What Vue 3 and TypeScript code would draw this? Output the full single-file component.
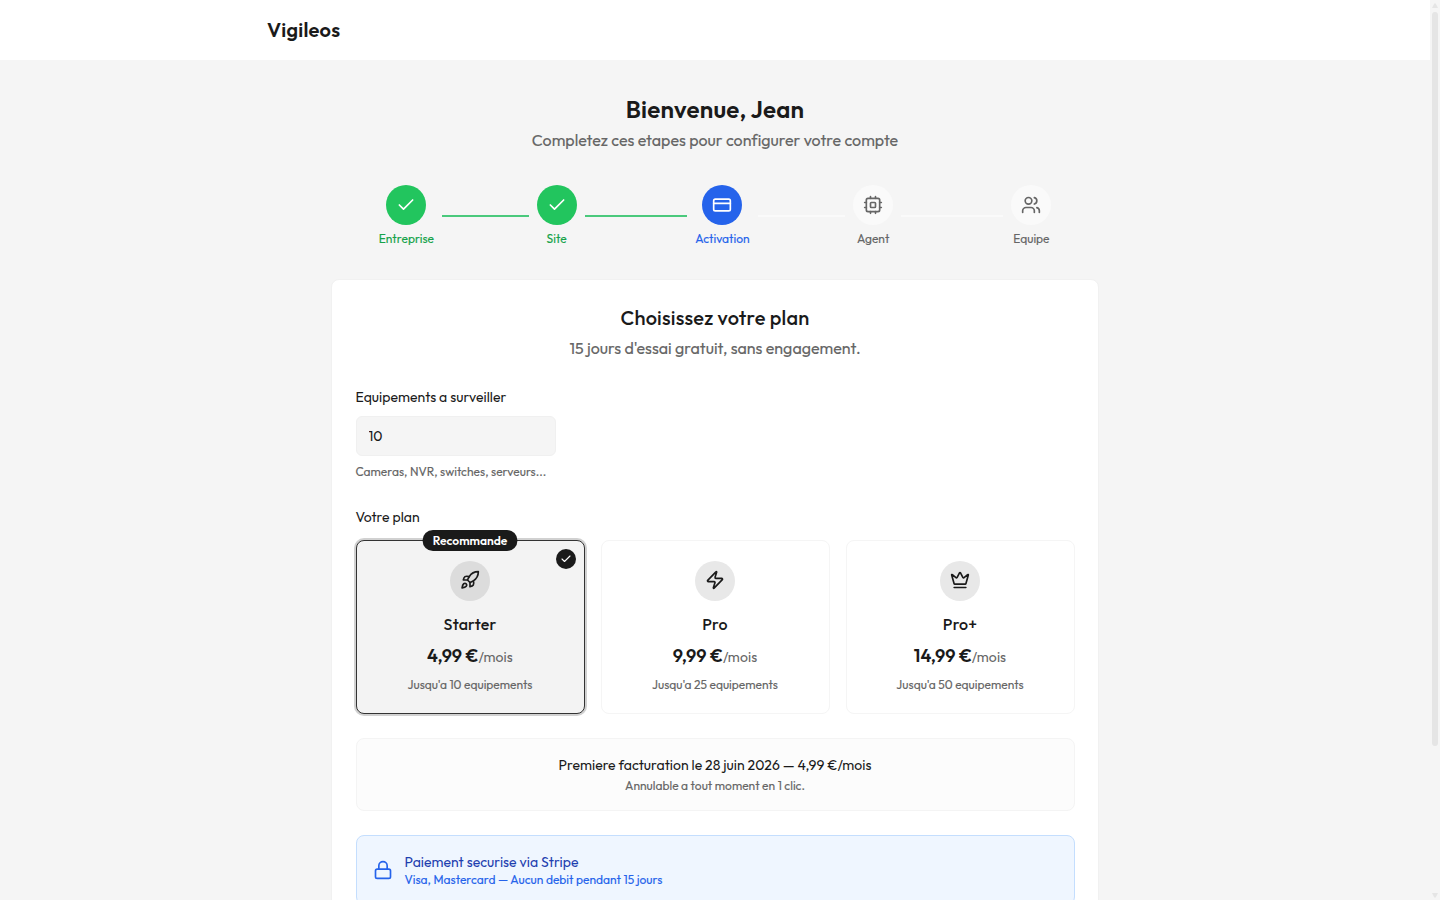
<script setup lang="ts">
import { ref } from 'vue'

type StepState = 'done' | 'current' | 'todo'
interface Step { label: string; state: StepState; icon: string; key: string }
interface Plan { name: string; key: string; price: string; limit: number; icon: string }

const icons: Record<string, string> = {
  check: '<path d="M20 6 9 17l-5-5"/>',
  card: '<rect width="20" height="14" x="2" y="5" rx="2"/><path d="M2 10h20"/>',
  cpu: '<rect width="16" height="16" x="4" y="4" rx="2"/><rect width="6" height="6" x="9" y="9" rx="1"/><path d="M15 2v2M15 20v2M2 15h2M2 9h2M20 15h2M20 9h2M9 2v2M9 20v2"/>',
  users: '<path d="M16 21v-2a4 4 0 0 0-4-4H6a4 4 0 0 0-4 4v2"/><circle cx="9" cy="7" r="4"/><path d="M22 21v-2a4 4 0 0 0-3-3.87M16 3.13a4 4 0 0 1 0 7.75"/>',
  rocket: '<path d="M4.5 16.5c-1.5 1.26-2 5-2 5s3.74-.5 5-2c.71-.84.7-2.13-.09-2.91a2.18 2.18 0 0 0-2.91-.09z"/><path d="m12 15-3-3a22 22 0 0 1 2-3.95A12.88 12.88 0 0 1 22 2c0 2.72-.78 7.5-6 11a22.35 22.35 0 0 1-4 2z"/><path d="M9 12H4s.55-3.03 2-4c1.62-1.08 5 0 5 0"/><path d="M12 15v5s3.03-.55 4-2c1.08-1.62 0-5 0-5"/>',
  zap: '<path d="M4 14a1 1 0 0 1-.78-1.63l9.9-10.2a.5.5 0 0 1 .86.46l-1.92 6.02A1 1 0 0 0 13 10h7a1 1 0 0 1 .78 1.63l-9.9 10.2a.5.5 0 0 1-.86-.46l1.92-6.02A1 1 0 0 0 11 14z"/>',
  crown: '<path d="M11.562 3.266a.5.5 0 0 1 .876 0L15.39 8.87a1 1 0 0 0 1.516.294L21.183 5.5a.5.5 0 0 1 .798.519l-2.834 10.246a1 1 0 0 1-.956.734H5.81a1 1 0 0 1-.957-.734L2.02 6.02a.5.5 0 0 1 .798-.519l4.276 3.664a1 1 0 0 0 1.516-.294z"/><path d="M5 21h14"/>',
  lock: '<rect width="18" height="11" x="3" y="11" rx="2"/><path d="M7 11V7a5 5 0 0 1 10 0v4"/>',
}

const steps: Step[] = [
  { label: 'Entreprise', state: 'done', icon: 'check', key: 'entreprise' },
  { label: 'Site', state: 'done', icon: 'check', key: 'site' },
  { label: 'Activation', state: 'current', icon: 'card', key: 'activation' },
  { label: 'Agent', state: 'todo', icon: 'cpu', key: 'agent' },
  { label: 'Equipe', state: 'todo', icon: 'users', key: 'equipe' },
]

const plans: Plan[] = [
  { name: 'Starter', key: 'starter', price: '4,99 €', limit: 10, icon: 'rocket' },
  { name: 'Pro', key: 'pro', price: '9,99 €', limit: 25, icon: 'zap' },
  { name: 'Pro+', key: 'proplus', price: '14,99 €', limit: 50, icon: 'crown' },
]

const devices = ref('10')
const selected = ref('starter')
</script>

<template>
  <div class="page">
    <div class="content">
      <header class="header">
        <div class="header-inner"><span class="brand">Vigileos</span></div>
      </header>

      <main class="main">
        <h1 class="title">Bienvenue, Jean</h1>
        <p class="subtitle">Completez ces etapes pour configurer votre compte</p>

        <nav class="steps">
          <div v-for="(s, i) in steps" :key="s.key" class="step-item" :class="s.state">
            <div class="step" :class="'step-' + s.key">
              <span class="circle"><svg class="icon" viewBox="0 0 24 24" v-html="icons[s.icon]" /></span>
              <span class="step-label small">{{ s.label }}</span>
            </div>
            <span v-if="i < steps.length - 1" class="line" />
          </div>
        </nav>

        <section class="panel">
          <h2 class="panel-title">Choisissez votre plan</h2>
          <p class="panel-sub">15 jours d'essai gratuit, sans engagement.</p>

          <label class="label label-devices" for="devices">Equipements a surveiller</label>
          <input id="devices" v-model="devices" class="input" type="text" />
          <p class="help small">Cameras, NVR, switches, serveurs...</p>

          <p class="label label-plan">Votre plan</p>
          <div class="plans">
            <div
              v-for="p in plans"
              :key="p.key"
              class="plan"
              :class="{ selected: selected === p.key }"
              @click="selected = p.key"
            >
              <span v-if="p.key === 'starter'" class="badge">Recommande</span>
              <span v-if="selected === p.key" class="tick">
                <svg class="icon" viewBox="0 0 24 24" v-html="icons.check" />
              </span>
              <span class="plan-icon"><svg class="icon" viewBox="0 0 24 24" v-html="icons[p.icon]" /></span>
              <h3 class="plan-name">{{ p.name }}</h3>
              <p class="price"><span class="amount">{{ p.price }}</span><span class="per">/mois</span></p>
              <p class="limit small">Jusqu'a {{ p.limit }} equipements</p>
            </div>
          </div>

          <div class="billing">
            <p class="billing-main">Premiere facturation le 28 juin 2026 — 4,99 €/mois</p>
            <p class="billing-sub small">Annulable a tout moment en 1 clic.</p>
          </div>

          <div class="secure">
            <svg class="icon lock" viewBox="0 0 24 24" v-html="icons.lock" />
            <div>
              <p class="secure-main">Paiement securise via Stripe</p>
              <p class="secure-sub small">Visa, Mastercard — Aucun debit pendant 15 jours</p>
            </div>
          </div>
        </section>
      </main>
    </div>

    <div class="scrollbar">
      <svg class="arrow" viewBox="0 0 10 12"><path d="M2 8 4.3 3.5h1.4L8 8z" /></svg>
      <span class="thumb" />
      <svg class="arrow arrow-down" viewBox="0 0 10 12"><path d="M2 5h6L5.7 9.5H4.3z" /></svg>
    </div>
  </div>
</template>

<style>
body { margin: 0; overflow: hidden; }
</style>

<style scoped>
.page {
  display: flex;
  height: 900px;
  overflow: hidden;
  background: #f5f5f5;
  color: #1a1a1a;
  font-family: Outfit, Lato, sans-serif;
}
.page * { box-sizing: border-box; }
h1, h2, h3, p { margin: 0; }
.icon {
  width: 20px;
  height: 20px;
  fill: none;
  stroke: currentColor;
  stroke-width: 2;
  stroke-linecap: round;
  stroke-linejoin: round;
}
.small {
  font-size: 12px;
  line-height: 16px;
  letter-spacing: 0.015px;
  -webkit-text-stroke: 0.12px currentColor;
}
.content { flex: 1; height: 900px; overflow: hidden; background: #f5f5f5; }
.header { height: 60px; background: #fff; }
.header-inner { width: 896px; height: 60px; margin: 0 auto; display: flex; align-items: center; }
.brand { font-size: 20px; font-weight: 600; line-height: 28px; letter-spacing: 0.2px; }
.main { width: 768px; margin: 0 auto; padding-top: 32px; }
.title { font-size: 24px; font-weight: 600; line-height: 34px; letter-spacing: 0.2px; text-align: center; }
.subtitle,
.panel-sub {
  font-size: 16px;
  letter-spacing: 0.01px;
  text-align: center;
  color: #666;
  -webkit-text-stroke: 0.12px currentColor;
}
.subtitle { line-height: 28px; }

.steps { display: grid; grid-template-columns: repeat(4, 158.25px) 40px; margin: 31px 47px 32px 47.4px; height: 62px; }
.step-item { display: flex; align-items: center; gap: 8px; color: #666; }
.step { display: flex; flex-direction: column; align-items: center; gap: 6px; width: 40px; flex: none; }
.step-entreprise { width: 56px; }
.step-activation { width: 55px; }
.circle {
  width: 40px;
  height: 40px;
  border-radius: 50%;
  background: #fafafa;
  display: flex;
  align-items: center;
  justify-content: center;
}
.step-label { white-space: nowrap; }
.line { flex: 1; height: 2px; margin-right: 8px; background: #fafafa; }
.done { color: #16a34a; }
.done .circle { background: #22c55e; color: #fff; }
.done .line { background: #4ac97c; }
.current { color: #2563eb; }
.current .circle { background: #2563eb; color: #fff; }

.panel { height: 760px; padding: 24px 23.5px; background: #fff; border: 1px solid #f1f1f1; border-radius: 8px; }
.panel-title { font-size: 20px; font-weight: 500; line-height: 28px; letter-spacing: 0.2px; text-align: center; }
.panel-sub { margin-top: 4px; line-height: 24px; }
.label { display: block; font-size: 14px; line-height: 20px; letter-spacing: 0.03px; }
.label-devices { margin-top: 27px; }
.label-plan { margin-top: 27px; }
.input {
  display: block;
  width: 200px;
  height: 40px;
  margin-top: 9px;
  padding: 0 12px;
  border: 1px solid #f0f0f0;
  border-radius: 6px;
  background: #f5f5f5;
  color: #1a1a1a;
  font: 14px Outfit, Lato, sans-serif;
}
.help { margin-top: 8px; color: #666; }

.plans { display: grid; grid-template-columns: repeat(3, 1fr); gap: 16px; margin-top: 13px; }
.plan {
  position: relative;
  display: flex;
  flex-direction: column;
  align-items: center;
  height: 174px;
  padding-top: 20px;
  border: 1px solid #f5f5f5;
  border-radius: 8px;
}
.plan.selected { background: #f3f3f3; border-color: #333; box-shadow: 0 0 0 2px #d1d1d1; }
.badge {
  position: absolute;
  top: -11px;
  left: 50%;
  width: 95px;
  height: 21px;
  transform: translateX(-50%);
  border-radius: 10.5px;
  background: #1a1a1a;
  color: #fff;
  font-size: 12px;
  font-weight: 600;
  line-height: 22px;
  text-align: center;
}
.tick {
  position: absolute;
  top: 8px;
  right: 8px;
  display: flex;
  align-items: center;
  justify-content: center;
  width: 20px;
  height: 20px;
  border-radius: 50%;
  background: #1a1a1a;
  color: #fff;
}
.tick .icon { width: 12px; height: 12px; stroke-width: 2.25; }
.plan-icon {
  display: flex;
  align-items: center;
  justify-content: center;
  width: 40px;
  height: 40px;
  border-radius: 50%;
  background: #e8e8e8;
}
.plan-icon .icon { margin-bottom: 2px; }
.selected .plan-icon { background: #dcdcdc; }
.plan-name { margin-top: 11px; font-size: 16px; font-weight: 500; line-height: 24px; letter-spacing: 0.15px; }
.price { margin-top: 6px; line-height: 28px; white-space: nowrap; }
.amount { font-size: 18px; font-weight: 600; }
.per { font-size: 14px; letter-spacing: 0.1px; color: #666; }
.limit { margin-top: 6px; color: #666; }

.billing {
  height: 73px;
  margin-top: 24px;
  padding: 16px;
  border: 1px solid #f4f4f4;
  border-radius: 8px;
  background: #fcfcfc;
  text-align: center;
}
.billing-main { font-size: 14px; line-height: 20px; letter-spacing: 0.015px; }
.billing-sub { margin-top: 3px; color: #666; }
.secure {
  display: flex;
  align-items: center;
  gap: 12px;
  height: 70px;
  margin-top: 24px;
  padding: 0 16px;
  border: 1px solid #c4defe;
  border-radius: 8px;
  background: #eff6ff;
}
.lock { color: #2563eb; }
.secure-main { font-size: 14px; line-height: 20px; letter-spacing: 0.02px; color: #1e40af; }
.secure-sub { color: #2563eb; }

.scrollbar { display: flex; flex-direction: column; width: 10px; height: 900px; background: #f5f5f5; }
.arrow { width: 10px; height: 12px; fill: #e5e5e5; }
.thumb { width: 6px; height: 734px; margin: 0 2px; border-radius: 3px; background: #e5e5e5; }
.arrow-down { margin-top: auto; }
</style>
